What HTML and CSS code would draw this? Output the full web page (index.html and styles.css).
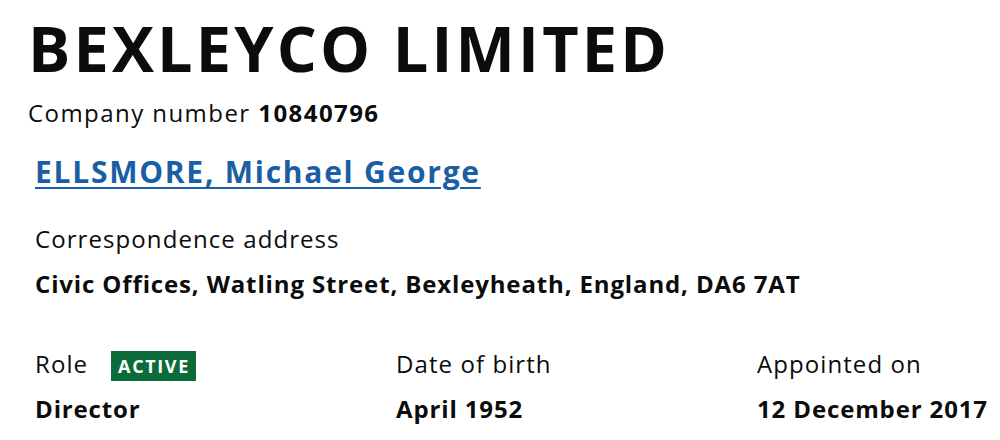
FILE: index.html
```html
<!DOCTYPE html>
<html lang="en">
<head>
<meta charset="utf-8">
<title>BEXLEYCO LIMITED</title>
<link rel="stylesheet" href="styles.css">
</head>
<body>
<main class="page">
  <h1 class="company-name">BEXLEYCO LIMITED</h1>
  <p class="company-number">Company number <strong>10840796</strong></p>
  <section class="officer">
    <h2 class="officer-name"><a href="#">ELLSMORE, Michael George</a></h2>
    <dl class="address">
      <dt>Correspondence address</dt>
      <dd>Civic Offices, Watling Street, Bexleyheath, England, DA6 7AT</dd>
    </dl>
    <div class="details">
      <dl class="detail">
        <dt class="role-label">Role <span class="tag">ACTIVE</span></dt>
        <dd>Director</dd>
      </dl>
      <dl class="detail">
        <dt>Date of birth</dt>
        <dd>April 1952</dd>
      </dl>
      <dl class="detail">
        <dt>Appointed on</dt>
        <dd>12 December 2017</dd>
      </dl>
    </div>
  </section>
</main>
</body>
</html>
```
FILE: styles.css
```css
html, body {
  margin: 0;
  padding: 0;
  background: #ffffff;
}
body {
  font-family: "Open Sans", "Liberation Sans", Arial, sans-serif;
  color: #0b0c0c;
}
.page {
  padding: 12px 0 0 28px;
}
.company-name {
  margin: 0;
  font-size: 63px;
  line-height: 72px;
  font-weight: 700;
  letter-spacing: 0.05em;
}
.company-number {
  margin: 14px 0 0 0;
  font-size: 24px;
  line-height: 30px;
  letter-spacing: 0.06em;
}
.company-number strong {
  font-weight: 700;
}
.officer {
  padding-left: 7px;
}
.officer-name {
  margin: 26px 0 0 0;
  font-size: 30px;
  line-height: 36px;
  font-weight: 700;
  letter-spacing: 0.058em;
}
.officer-name a {
  color: #1a5ea6;
  text-decoration: underline;
  text-decoration-thickness: 2px;
  text-underline-offset: 4px;
}
dl, dd {
  margin: 0;
}
.address {
  margin-top: 34px;
}
.address dt, .detail dt {
  font-size: 24px;
  line-height: 30px;
  letter-spacing: 0.045em;
}
.address dd, .detail dd {
  font-size: 24px;
  line-height: 30px;
  font-weight: 700;
  letter-spacing: 0.036em;
  margin-top: 15px;
}
.details {
  display: grid;
  grid-template-columns: 361px 361px 1fr;
  margin-top: 50px;
}
.role-label {
  display: flex;
  align-items: flex-start;
}
.tag {
  display: block;
  margin: 2px 0 -2px 23px;
  padding: 0 6px 0 7px;
  height: 30px;
  background: #0b6b3a;
  color: #ffffff;
  font-size: 18px;
  line-height: 30px;
  font-weight: 700;
  letter-spacing: 0.09em;
}
```
